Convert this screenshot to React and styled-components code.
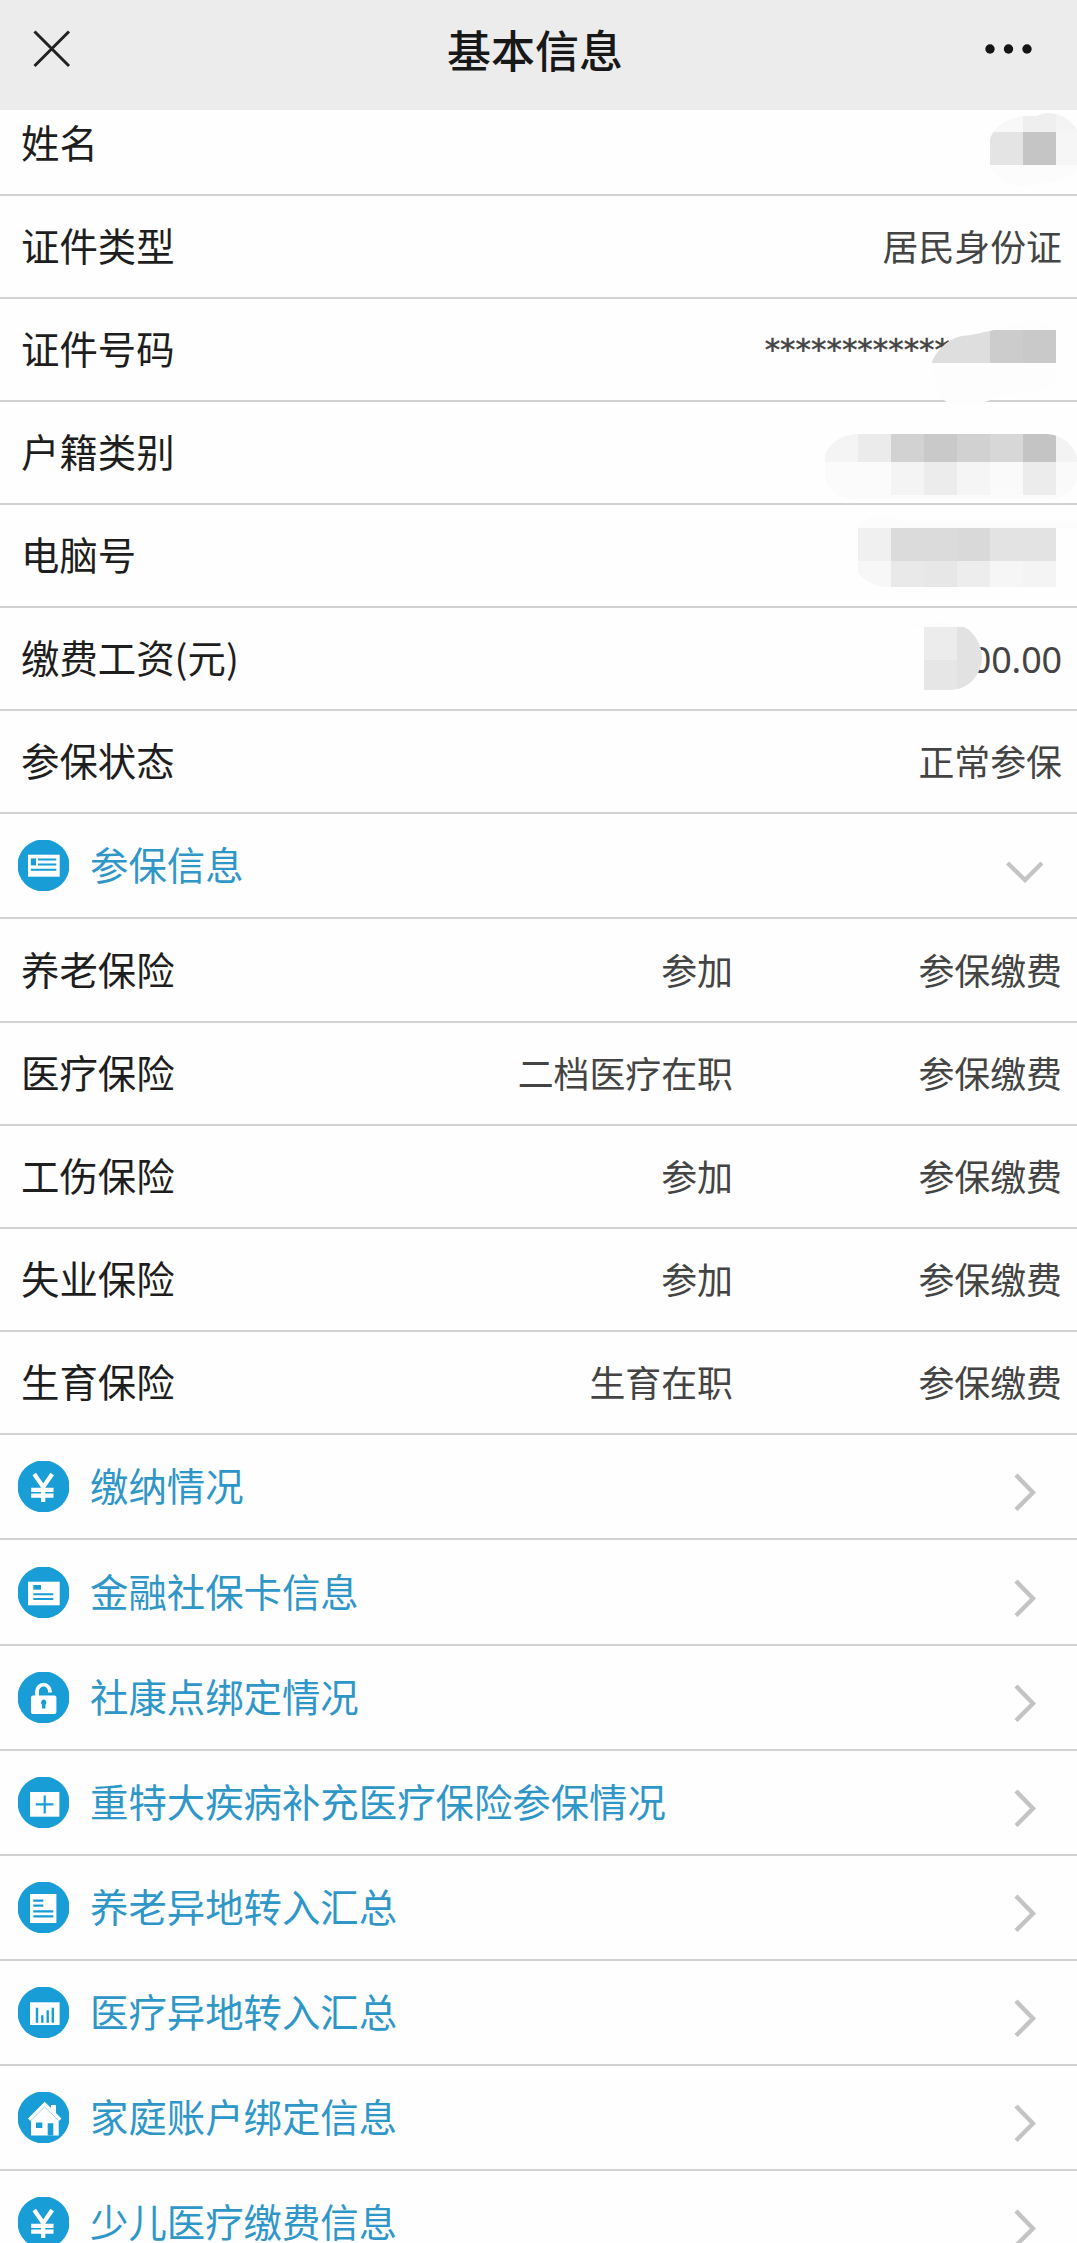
import React from 'react';
import styled, { createGlobalStyle } from 'styled-components';

const BLUE = '#189dd7';

const GlobalStyle = createGlobalStyle`
  *, *::before, *::after { box-sizing: border-box; }
  body {
    margin: 0;
    background: #fefefe;
    font-family: 'Noto Sans CJK SC', sans-serif;
  }
`;

const Page = styled.div`
  width: 100%;
  height: 2243px;
  overflow: hidden;
  background: #fefefe;
`;

const TopBar = styled.header`
  position: relative;
  z-index: 1;
  display: grid;
  grid-template-columns: 200px 1fr 200px;
  align-items: center;
  height: 110px;
  padding: 0 45px 12px 33px;
  background: #ececec;
`;

const Title = styled.h1`
  margin: 0;
  padding: 0 0 0 5px;
  text-align: center;
  font-size: 44px;
  line-height: 60px;
  font-weight: 500;
  color: #181818;
`;

const BarButton = styled.button`
  display: flex;
  justify-self: ${(p) => p.$side};
  padding: 0;
  border: 0;
  background: none;
`;

const List = styled.main`
  margin-top: -17px;
`;

const Row = styled.div`
  position: relative;
  display: flex;
  align-items: center;
  height: ${(p) => p.$height || 103}px;
  padding: 0 15px 0 21px;
  border-bottom: 2px solid #d2d2d2;
`;

const Label = styled.span`
  flex: 1;
  padding-bottom: 5px;
  font-size: 38.4px;
  line-height: 40px;
  white-space: nowrap;
  color: #1e1e1e;
`;

const Value = styled.span`
  width: ${(p) => p.$width || 'auto'};
  padding-bottom: 3px;
  text-align: right;
  font-size: 35.9px;
  line-height: 52px;
  white-space: nowrap;
  color: #444;
`;

const Amount = styled(Value)`
  padding: 3px 0 0;
  font-family: 'Noto Sans', sans-serif;
  letter-spacing: -0.1px;
`;

const MaskedNumber = styled(Value)`
  padding: 0 112px 2px 0;
  font-family: 'DejaVu Sans', sans-serif;
  font-size: 30.9px;
  -webkit-text-stroke: 0.5px #444;
`;

const SectionRow = styled(Row)`
  padding: 0 34px 0 18px;
`;

const SectionLabel = styled(Label)`
  padding-left: 21px;
  color: #2f97c8;
`;

const Badge = styled.svg`
  width: 51px;
  height: 51px;
  flex: none;
`;

const Chevron = styled.svg`
  width: 38px;
  height: 38px;
  flex: none;
  margin-top: ${(p) => (p.$open ? 12 : 11)}px;
`;

const MosaicArt = styled.svg`
  position: absolute;
  right: 0;
  top: ${(p) => p.$top}px;
`;

const glyphs = {
  idCard: (
    <>
      <path fill="#fff" d="M10 14.7h31.7v22H10z" />
      <path fill={BLUE} d="M12.8 18.4h5.2v7h-5.2z" />
      <path stroke={BLUE} strokeWidth="2" d="M20 19.4h18.3M20 24.4h18.3M12.8 29.8h25.5" />
    </>
  ),
  yen: (
    <path
      fill="none"
      stroke="#fff"
      strokeWidth="4.2"
      d="M16.2 13l9 13 9-13M25.2 24.5V41M13.2 28.800h22.3M13.2 34.6h22.3"
    />
  ),
  bankCard: (
    <>
      <path fill="#fff" d="M10 14.7h31.7v23.6H10z" />
      <path fill={BLUE} d="M15.3 18H23v4.7h-7.7z" />
      <path stroke={BLUE} strokeWidth="2" d="M15.3 27.2h20M15.3 31.9h20" />
    </>
  ),
  lock: (
    <>
      <rect x="13" y="23.5" width="25.4" height="18.5" rx="2" fill="#fff" />
      <path fill="none" stroke="#fff" strokeWidth="3.8" d="M19 25v-5.5a6.500 6.800 0 0 1 13 0v1" />
      <path fill={BLUE} d="M25.700 27.6a3 3 0 0 1 1.700 5.2V36.4h-3.4v-3.600a3 3 0 0 1 1.700-5.200z" />
    </>
  ),
  plus: (
    <>
      <path fill="#fff" d="M12 15h29.4v24.7H12z" />
      <path stroke={BLUE} strokeWidth="2.2" d="M17.8 27.4h17.6M26.7 18.4v18" />
    </>
  ),
  sheet: (
    <>
      <path fill="#fff" d="M12 12h26.4v29H12z" />
      <path stroke={BLUE} strokeWidth="2.2" d="M15.3 18.7h10M15.3 23.7h10M15.3 29.4h20M15.3 34.4h20" />
    </>
  ),
  bars: (
    <>
      <path fill="#fff" d="M12 15.3h29.6V38H12z" />
      <path stroke={BLUE} strokeWidth="2.4" d="M19 20.7v15M24.3 28.3v7.4M29.7 23.3v12.4M34.8 20.7v15" />
    </>
  ),
  home: (
    <>
      <path
        fill="#fff"
        d="M26.7 9.7l6.3 6.2V13h5v8l5.4 5.5-1.7 1.9h-1v15H13v-15h-1.2L10 26.4z"
      />
      <path fill="none" stroke={BLUE} strokeOpacity=".4" strokeWidth="1" d="M13 28.4l13.7-13.5 13.7 13.5" />
      <path fill={BLUE} d="M18 30.6h6.3V36H18zM29.7 31.2h5.6v12.2h-5.6z" />
    </>
  ),
};

const Icon = ({ name }) => (
  <Badge viewBox="0 0 51 51" aria-hidden="true">
    <circle cx="25.5" cy="25.5" r="26" fill={BLUE} />
    {glyphs[name]}
  </Badge>
);

const Arrow = ({ open }) => (
  <Chevron $open={open} viewBox="0 0 38 38" aria-hidden="true">
    <path
      fill="none"
      stroke="#c4c4c4"
      strokeWidth="4.4"
      d={open ? 'M2.5 10L20 27L37 10' : 'M11 2L28 19.5L11 36.5'}
    />
  </Chevron>
);

// Each patch keeps page coordinates in its viewBox; cells are [x, y, width, height, grey].
const patches = {
  name: {
    box: [985, 110, 92, 82],
    top: 17,
    outline:
      'M990 139C994 126 1010 116 1025 116H1036C1042 113.500 1047 113 1050 113C1062 114 1073 121 1077 130V168C1070 178 1055 183 1040 183C1030 185 1026 186 1020 186C1005 185 992 176 990 163Z',
    cells: [
      [985, 110, 38, 22, '#f8f8f8'], [1023, 110, 33, 22, '#efefef'], [1056, 110, 33, 22, '#f4f4f4'],
      [985, 132, 38, 33, '#e4e4e4'], [1023, 132, 33, 33, '#c5c5c5'], [1056, 132, 33, 33, '#f6f6f6'],
      [985, 165, 92, 25, '#fcfcfc'],
    ],
  },
  idNumber: {
    box: [925, 315, 152, 95],
    top: 16,
    outline:
      'M931.700 363C936 350 950 338 962 336C975 335 983 332 990 331C1000 329 1010 322 1030 321.500C1042 321 1052 325 1056 330V381C1050 388 1040 391 1030 391L1000 396C985 402 975 407 962 406C950 405 942 400 938 394Z',
    cells: [
      [925, 315, 152, 95, '#fdfdfd'], [925, 330, 65, 33, '#dedede'],
      [990, 330, 33, 33, '#cccccc'], [1023, 330, 33, 33, '#c9c9c9'],
    ],
  },
  household: {
    box: [820, 430, 257, 74],
    top: 28,
    outline:
      'M825 455C830 442 842 434 860 434H1045C1061 434 1073 444 1077 457V480C1073 492 1060 500 1045 500H857C842 500 829 492 825 479Z',
    cells: [
      [820, 430, 38, 32, '#f4f4f4'], [858, 430, 33, 32, '#ebebeb'], [891, 430, 33, 32, '#d2d2d2'],
      [924, 430, 33, 32, '#c9c9c9'], [957, 430, 33, 32, '#d1d1d1'], [990, 430, 33, 32, '#d7d7d7'],
      [1023, 430, 33, 32, '#c4c4c4'], [1056, 430, 33, 32, '#f3f3f3'],
      [820, 462, 257, 42, '#fbfbfb'],
      [891, 462, 33, 33, '#f4f4f4'], [924, 462, 33, 33, '#ececec'], [957, 462, 33, 33, '#f5f5f5'],
      [990, 462, 33, 33, '#fafafa'], [1023, 462, 33, 33, '#ececec'], [1056, 462, 33, 33, '#fafafa'],
    ],
  },
  computerNo: {
    box: [850, 512, 227, 80],
    top: 7,
    outline:
      'M856 528C864 519 874 515 882 515C889 516 895 519 899 521H1077V528H1056V587H885C873 586 863 579 858 573V528Z',
    cells: [
      [850, 512, 227, 80, '#fcfcfc'],
      [858, 528, 33, 33, '#f0f0f0'], [891, 528, 66, 33, '#dbdbdb'], [957, 528, 33, 33, '#d9d9d9'],
      [990, 528, 66, 33, '#e3e3e3'],
      [858, 561, 33, 26, '#f7f7f7'], [891, 561, 33, 26, '#e9e9e9'], [924, 561, 33, 26, '#e7e7e7'],
      [957, 561, 33, 26, '#ededed'], [990, 561, 33, 26, '#f6f6f6'], [1023, 561, 33, 26, '#f4f4f4'],
    ],
  },
  salary: {
    box: [908, 620, 169, 74],
    top: 12,
    outline:
      'M912 627C925 622 955 622 965 627.500C975 633 982 645 982 658C981 676 968 690 950 690H924V627Z',
    cells: [
      [908, 620, 80, 7, '#fcfcfc'], [924, 627, 33, 33, '#ececec'],
      [924, 660, 33, 30, '#e6e6e6'], [957, 627, 30, 63, '#e2e2e2'],
    ],
  },
};

const Mosaic = ({ id }) => {
  const { box, top, outline, cells } = patches[id];
  return (
    <MosaicArt $top={top} width={box[2]} height={box[3]} viewBox={box.join(' ')} aria-hidden="true">
      <clipPath id={`patch-${id}`}>
        <path d={outline} />
      </clipPath>
      <g clipPath={`url(#patch-${id})`} shapeRendering="crispEdges">
        {cells.map(([x, y, w, h, fill]) => (
          <rect key={`${x}-${y}`} x={x} y={y} width={w} height={h} fill={fill} />
        ))}
      </g>
    </MosaicArt>
  );
};

const profile = [
  { label: '姓名', patch: 'name' },
  { label: '证件类型', value: '居民身份证' },
  { label: '证件号码', value: '************', as: MaskedNumber, patch: 'idNumber' },
  { label: '户籍类别', patch: 'household' },
  { label: '电脑号', patch: 'computerNo' },
  { label: '缴费工资(元)', value: '00.00', as: Amount, patch: 'salary' },
  { label: '参保状态', value: '正常参保' },
];

const insurances = [
  ['养老保险', '参加', 104],
  ['医疗保险', '二档医疗在职', 103],
  ['工伤保险', '参加', 103],
  ['失业保险', '参加', 103],
  ['生育保险', '生育在职', 103],
];

const sections = [
  ['yen', '缴纳情况', 105],
  ['bankCard', '金融社保卡信息', 106],
  ['lock', '社康点绑定情况', 105],
  ['plus', '重特大疾病补充医疗保险参保情况', 105],
  ['sheet', '养老异地转入汇总', 105],
  ['bars', '医疗异地转入汇总', 105],
  ['home', '家庭账户绑定信息', 105],
  ['yen', '少儿医疗缴费信息', 105],
];

export default function App() {
  return (
    <>
      <GlobalStyle />
      <Page>
        <TopBar>
          <BarButton $side="start" aria-label="关闭">
            <svg width="38" height="38" viewBox="0 0 38 38">
              <path stroke="#222" strokeWidth="3" d="M1.500 1.500L36 36M36 1.500L1.500 36" />
            </svg>
          </BarButton>
          <Title>基本信息</Title>
          <BarButton $side="end" aria-label="更多">
            <svg width="47" height="10" viewBox="0 0 47 10">
              <circle cx="5" cy="5" r="4.700" fill="#151515" />
              <circle cx="23.500" cy="5" r="4.700" fill="#151515" />
              <circle cx="42" cy="5" r="4.700" fill="#151515" />
            </svg>
          </BarButton>
        </TopBar>
        <List>
          {profile.map(({ label, value, as: Field = Value, patch }) => (
            <Row key={label}>
              <Label>{label}</Label>
              {value && <Field>{value}</Field>}
              {patch && <Mosaic id={patch} />}
            </Row>
          ))}
          <SectionRow $height={105}>
            <Icon name="idCard" />
            <SectionLabel>参保信息</SectionLabel>
            <Arrow open />
          </SectionRow>
          {insurances.map(([label, plan, height]) => (
            <Row key={label} $height={height}>
              <Label>{label}</Label>
              <Value>{plan}</Value>
              <Value $width="329px">参保缴费</Value>
            </Row>
          ))}
          {sections.map(([icon, label, height]) => (
            <SectionRow key={label} $height={height}>
              <Icon name={icon} />
              <SectionLabel>{label}</SectionLabel>
              <Arrow />
            </SectionRow>
          ))}
        </List>
      </Page>
    </>
  );
}
